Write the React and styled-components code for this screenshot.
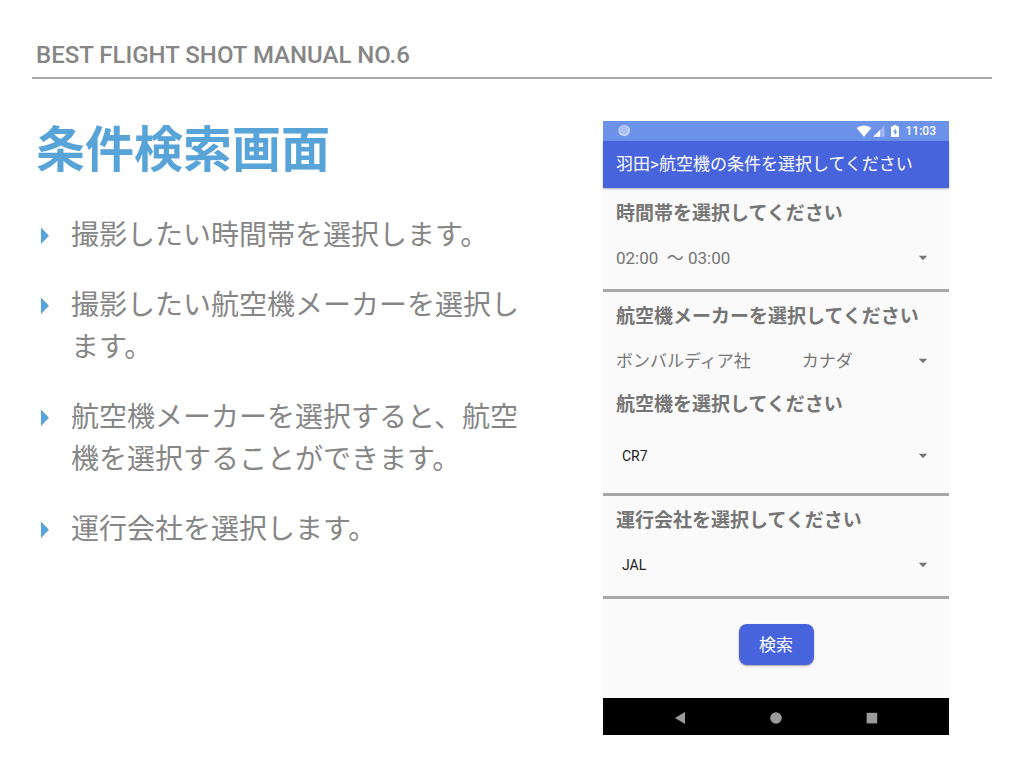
import React from "react";
import styled, { createGlobalStyle } from "styled-components";

const GlobalStyle = createGlobalStyle`
  *, *::before, *::after { box-sizing: border-box; }
  body {
    margin: 0;
    background: #fff;
    font-family: Roboto, "Noto Sans CJK JP", sans-serif;
  }
`;

const Slide = styled.div`
  min-height: 100vh;
  padding: 41px 32px 32px;
  color: #868686;
`;

const SlideHeader = styled.header`
  padding: 0 4px 8px;
  border-bottom: 2px solid #ababab;
  font-size: 24px;
  font-weight: 500;
  line-height: 28px;
`;

const Columns = styled.main`
  display: flex;
  align-items: flex-start;
  justify-content: space-between;
  gap: 40px;
  padding: 42px 43px 0 4px;
`;

const Copy = styled.section`
  flex: 0 1 484px;
  min-width: 0;
`;

const Title = styled.h1`
  margin: 0 0 41px;
  color: #58a3d8;
  font-family: "Noto Sans CJK JP", sans-serif;
  font-size: 49px;
  font-weight: 700;
  line-height: 50px;
`;

const Steps = styled.ul`
  display: flex;
  flex-direction: column;
  gap: 28px;
  margin: 0;
  padding: 0;
  list-style: none;
`;

const Step = styled.li`
  display: flex;
  gap: 22px;
  padding-left: 5px;
  font-family: "Noto Sans CJK JP", sans-serif;
  font-size: 28px;
  line-height: 42px;
`;

const Marker = styled.svg`
  flex: none;
  width: 8px;
  height: 42px;
  fill: #58a3d8;
`;

const Phone = styled.section`
  flex: 0 0 346px;
  background: #fafafa;
  color: #757575;
`;

const StatusBar = styled.div`
  display: flex;
  align-items: center;
  height: 20px;
  padding: 0 13px 0 15px;
  background: #6c92ea;
  color: #fff;
  font-size: 12px;
  font-weight: 500;
`;

const StatusIcons = styled.svg`
  width: 46px;
  height: 14px;
  margin: 0 4px 0 auto;
`;

const AppBar = styled.h2`
  margin: 0;
  padding: 0 13px;
  background: #4764dc;
  color: #fff;
  font-size: 17px;
  font-weight: 400;
  line-height: 47px;
  box-shadow: 0 1px 2px rgba(0, 0, 0, 0.3);
`;

const Form = styled.form`
  padding-top: 1px;
`;

const Group = styled.div`
  padding: 11px 13px 1px;
  border-bottom: 3px solid #a8a8a8;
`;

const Label = styled.label`
  display: block;
  font-size: 19px;
  font-weight: 700;
  line-height: 28px;
`;

const SelectBox = styled.div`
  display: flex;
  align-items: center;
  height: ${(p) => (p.$tall ? 73 : 60)}px;
  position: relative;
`;

const Select = styled.select`
  appearance: none;
  width: 100%;
  height: 40px;
  margin: 0;
  padding: 0 32px 0 ${(p) => (p.$compact ? 6 : 0)}px;
  border: 0;
  background: transparent;
  color: ${(p) => (p.$compact ? "#222" : "#757575")};
  font-family: inherit;
  font-size: ${(p) => (p.$compact ? 14 : 17)}px;
`;

const Caret = styled.svg`
  position: absolute;
  right: 8px;
  width: 10px;
  height: 6px;
  fill: #757575;
  pointer-events: none;
`;

const Actions = styled.div`
  display: flex;
  justify-content: center;
  padding: 25px 0 33px;
`;

const SearchButton = styled.button`
  width: 75px;
  height: 41px;
  padding: 0 0 2px;
  border: 0;
  border-radius: 8px;
  background: #4764dc;
  color: #fff;
  font-family: inherit;
  font-size: 17px;
  box-shadow: 0 1px 2px rgba(0, 0, 0, 0.35);
`;

const NavBar = styled.nav`
  display: flex;
  align-items: center;
  justify-content: center;
  gap: 72px;
  height: 37px;
  padding-top: 3px;
  background: #000;
`;

const NavButton = styled.button`
  width: 24px;
  height: 24px;
  padding: 0;
  border: 0;
  background: transparent;

  svg {
    display: block;
    fill: #9b9b9b;
  }
`;

const steps = [
  "撮影したい時間帯を選択します。",
  "撮影したい航空機メーカーを選択します。",
  "航空機メーカーを選択すると、航空機を選択することができます。",
  "運行会社を選択します。",
];

function Field({ id, label, value, compact, tall }) {
  return (
    <>
      <Label htmlFor={id}>{label}</Label>
      <SelectBox $tall={tall}>
        <Select id={id} $compact={compact} defaultValue={value}>
          <option value={value}>{value}</option>
        </Select>
        <Caret viewBox="0 0 10 6" aria-hidden="true">
          <path d="M.8 .8H9.2L5 5.2Z" />
        </Caret>
      </SelectBox>
    </>
  );
}

export default function App() {
  return (
    <Slide>
      <GlobalStyle />
      <SlideHeader>BEST FLIGHT SHOT MANUAL NO.6</SlideHeader>
      <Columns>
        <Copy>
          <Title>条件検索画面</Title>
          <Steps>
            {steps.map((text) => (
              <Step key={text}>
                <Marker viewBox="0 0 8 42" aria-hidden="true">
                  <path d="M0 15.6L8 23.8L0 32.1Z" />
                </Marker>
                <span>{text}</span>
              </Step>
            ))}
          </Steps>
        </Copy>
        <Phone>
          <StatusBar>
            <svg width="13" height="14" viewBox="0 0 13 14" aria-hidden="true">
              <circle cx="6.2" cy="6.5" r="5.8" fill="#c6d4f7" />
              <circle cx="5.8" cy="6" r="4.4" fill="#a9bff3" />
            </svg>
            <StatusIcons viewBox="0 0 46 14" fill="#fff" aria-hidden="true">
              <path d="M.6 4C4.6 .6 11.4 .6 15.4 4L8 12.8Z" />
              <path d="M28.5 1.6V12.8H17.2Z" opacity=".35" />
              <path d="M24 6V12.8H17.2Z" />
              <path
                fillRule="evenodd"
                d="M37.5 1H40.5V2.2H42.2Q43 2.2 43 3V12.2Q43 13 42.2 13H35.8Q35 13 35 12.2V3Q35 2.2 35.8 2.2H37.5ZM40 4L37 8.2H38.7V11.4L41.3 7.2H39.6Z"
              />
            </StatusIcons>
            <span>11:03</span>
          </StatusBar>
          <AppBar>羽田&gt;航空機の条件を選択してください</AppBar>
          <Form onSubmit={(e) => e.preventDefault()}>
            <Group>
              <Field id="time" label="時間帯を選択してください" value={"02:00\u00a0 〜 03:00"} />
            </Group>
            <Group>
              <Field
                id="maker"
                label="航空機メーカーを選択してください"
                value={"ボンバルディア社\u3000\u3000\u3000カナダ"}
              />
              <Field id="aircraft" label="航空機を選択してください" value="CR7" compact tall />
            </Group>
            <Group>
              <Field id="airline" label="運行会社を選択してください" value="JAL" compact />
            </Group>
            <Actions>
              <SearchButton type="submit">検索</SearchButton>
            </Actions>
          </Form>
          <NavBar>
            <NavButton type="button" aria-label="戻る">
              <svg width="24" height="24" viewBox="0 0 24 24"><path d="M17 6V18L7 12Z" /></svg>
            </NavButton>
            <NavButton type="button" aria-label="ホーム">
              <svg width="24" height="24" viewBox="0 0 24 24"><circle cx="12" cy="12" r="5.8" /></svg>
            </NavButton>
            <NavButton type="button" aria-label="履歴">
              <svg width="24" height="24" viewBox="0 0 24 24"><rect x="6.6" y="6.8" width="10.6" height="10.6" /></svg>
            </NavButton>
          </NavBar>
        </Phone>
      </Columns>
    </Slide>
  );
}
